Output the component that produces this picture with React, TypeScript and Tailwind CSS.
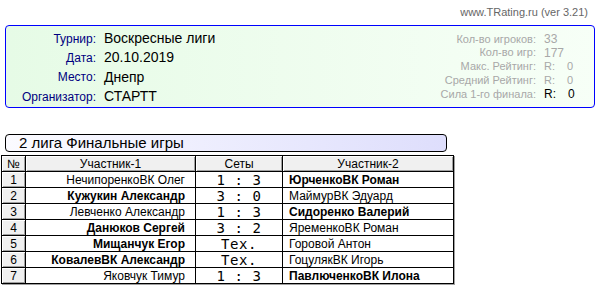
const games: [string, boolean, string, string, boolean][] = [
	['НечипоренкоВК Олег', false, '1 : 3', 'ЮрченкоВК Роман', true],
	['Кужукин Александр', true, '3 : 0', 'МаймурВК Эдуард', false],
	['Левченко Александр', false, '1 : 3', 'Сидоренко Валерий', true],
	['Данюков Сергей', true, '3 : 2', 'ЯременкоВК Роман', false],
	['Мищанчук Егор', true, 'Тех.', 'Горовой Антон', false],
	['КовалевВК Александр', true, 'Тех.', 'ГоцулякВК Игорь', false],
	['Яковчук Тимур', false, '1 : 3', 'ПавлюченкоВК Илона', true],
];

const info = [
	['Турнир:', 'Воскресные лиги'],
	['Дата:', '20.10.2019'],
	['Место:', 'Днепр'],
	['Организатор:', 'СТАРТТ'],
];

const stats: [string, string, boolean][] = [
	['Кол-во игроков:', '33', false],
	['Кол-во игр:', '177', false],
	['Макс. Рейтинг:', '0', true],
	['Средний Рейтинг:', '0', true],
	['Сила 1-го финала:', '0', true],
];

const bevel = 'bg-[#f0f0f0] shadow-[inset_1px_1px_0_#ffffff,inset_-1px_-1px_0_#a0a0a0]';
const cell = 'h-[16px] border border-black p-0 leading-[14px]';

export default function App() {
	return (
		<div className="h-[285px] w-[600px] overflow-hidden bg-white font-['Liberation_Sans',Arial,sans-serif]">
			<div className="flex h-[23px] items-center justify-end pr-[12px] pt-[1px] text-[11px] text-[#666666]">
				www.TRating.ru (ver 3.21)
			</div>

			<div className="mx-[5px] mt-[2px] flex h-[83px] justify-between rounded-[4px] border border-[#0000ff] bg-gradient-to-r from-[#e6fbe6] to-[#f7fff7]">
				<div className="grid grid-cols-[90px_auto] content-start gap-x-[8px] pt-[3px]">
					{info.map(([label, value]) => (
						<div key={label} className="contents">
							<div className="flex h-[19.3px] items-center justify-end text-[12px] text-[#000080]">{label}</div>
							<div className="flex h-[19.3px] items-center text-[14px] text-black">{value}</div>
						</div>
					))}
				</div>
				<div className="grid grid-cols-[auto_41px] content-start gap-x-[8px] pr-[9px] pt-[6px] text-[11px]">
					{stats.map(([label, value, rating], i) => (
						<div key={label} className="contents">
							<div className="flex h-[13.75px] items-center justify-end text-[#a8a8a8]">{label}</div>
							<div className={`flex h-[13.75px] items-center ${i === 4 ? 'text-[12px] text-black' : 'text-[#a8a8a8]'}`}>
								{rating ? (
									<>
										<span>R:</span>
										<span className="ml-[12px]">{value}</span>
									</>
								) : (
									<span className="text-[12px]">{value}</span>
								)}
							</div>
						</div>
					))}
				</div>
			</div>

			<div className="ml-[5px] mt-[26px] flex h-[18px] w-[442px] items-center rounded-[4px] border border-black bg-gradient-to-r from-[#fbfbff] to-[#dedefc] pl-[13px] text-[15px] text-black">
				2 лига Финальные игры
			</div>

			<table className="ml-[1px] mt-[3px] w-[452px] table-fixed border-collapse border border-black text-[12px] shadow-[1px_1px_0_#a0a0a0]">
				<colgroup>
					<col className="w-[24px]" />
					<col className="w-[170px]" />
					<col className="w-[87px]" />
					<col className="w-[171px]" />
				</colgroup>
				<thead>
					<tr className="h-[16px] text-black">
						<th className={`${cell} text-center font-normal ${bevel}`}>№</th>
						<th className={`${cell} text-center font-normal ${bevel}`}>Участник-1</th>
						<th className={`${cell} text-center font-normal ${bevel}`}>Сеты</th>
						<th className={`${cell} text-center font-normal ${bevel}`}>Участник-2</th>
					</tr>
				</thead>
				<tbody>
					{games.map(([p1, w1, score, p2, w2], i) => (
						<tr key={i} className="h-[16px]">
							<td className={`${cell} text-center ${bevel}`}>{i + 1}</td>
							<td className={`${cell} pr-[10px] text-right ${w1 ? 'font-bold' : ''}`}>{p1}</td>
							<td className={`${cell} text-center font-['DejaVu_Sans_Mono',monospace] text-[14px] tracking-[0.6px]`}>{score}</td>
							<td className={`${cell} pl-[6px] text-left ${w2 ? 'font-bold' : ''}`}>{p2}</td>
						</tr>
					))}
				</tbody>
			</table>
		</div>
	);
}
